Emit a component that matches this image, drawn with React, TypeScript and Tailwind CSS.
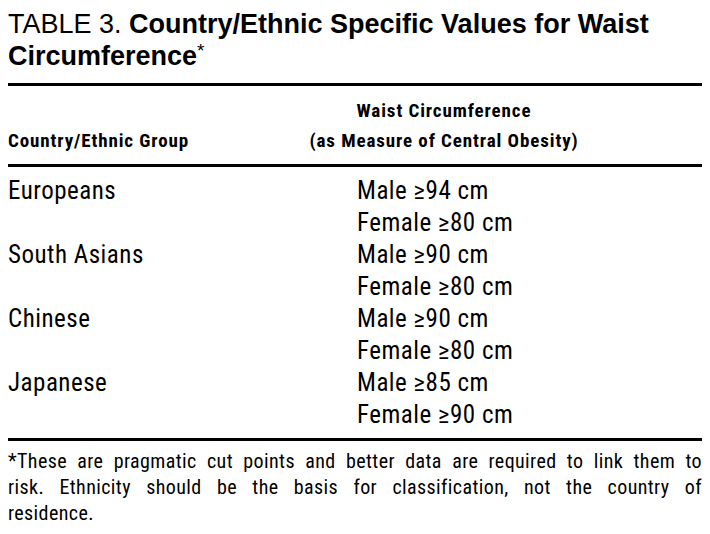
const rows = [
  { group: 'Europeans', male: 'Male ≥94 cm', female: 'Female ≥80 cm' },
  { group: 'South Asians', male: 'Male ≥90 cm', female: 'Female ≥80 cm' },
  { group: 'Chinese', male: 'Male ≥90 cm', female: 'Female ≥80 cm' },
  { group: 'Japanese', male: 'Male ≥85 cm', female: 'Female ≥90 cm' },
];

export default function App() {
  return (
    <div className="w-[710px] h-[534px] bg-white text-black pl-[8px] pr-[8px] overflow-hidden">
      <h1 className="pt-[8px] font-['Liberation_Sans',Arial,sans-serif] text-[27px] leading-[32px] font-normal">
        TABLE 3. <span className="font-bold">Country/Ethnic Specific Values for Waist</span>
        <br />
        <span className="font-bold">Circumference</span>
        <span className="relative -top-[8px] text-[19px]">*</span>
      </h1>

      <div className="mt-[8px] h-[3px] bg-black" />

      <div className="grid grid-cols-[300px_272px] pt-[10px] pb-[8px] font-['Roboto_Condensed',sans-serif] font-bold text-[19px] leading-[30px] tracking-[0.9px]">
        <div className="self-end">Country/Ethnic Group</div>
        <div className="text-center">
          <div>Waist Circumference</div>
          <div className="whitespace-nowrap">(as Measure of Central Obesity)</div>
        </div>
      </div>

      <div className="h-[3px] bg-black" />

      <div className="pt-[8px] pb-[7px] font-['Roboto_Condensed',sans-serif] text-[25px] leading-[32px] tracking-[0.5px]">
        {rows.map((r) => (
          <div key={r.group} className="grid grid-cols-[300px_1fr]">
            <div>{r.group}</div>
            <div className="pl-[49px]">
              <div>{r.male}</div>
              <div>{r.female}</div>
            </div>
          </div>
        ))}
      </div>

      <div className="h-[3px] bg-black" />

      <div className="pt-[7px] font-['Roboto_Condensed',sans-serif] text-[20px] leading-[26px] tracking-[0.4px]">
        <div className="text-justify [text-align-last:justify]">
          *These are pragmatic cut points and better data are required to link them to
        </div>
        <div className="text-justify [text-align-last:justify]">
          risk. Ethnicity should be the basis for classification, not the country of
        </div>
        <div>residence.</div>
      </div>
    </div>
  );
}
